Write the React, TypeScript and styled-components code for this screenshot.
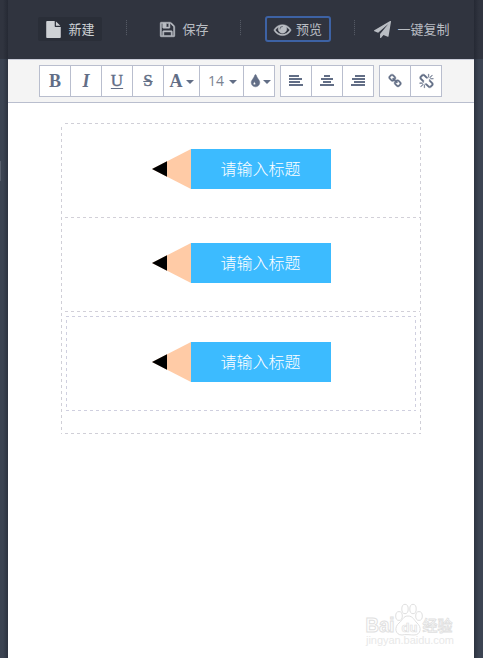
import React from 'react';
import styled, { createGlobalStyle, css } from 'styled-components';

const GlobalStyle = createGlobalStyle`
  * { box-sizing: border-box; }
  html, body { margin: 0; padding: 0; overflow: hidden; }
  body {
    font-family: "Liberation Sans", "Noto Sans CJK SC", sans-serif;
    background: #3c4452;
  }
`;

const paths = {
  file: 'M1152 512v-472q22 14 36 28l408 408q14 14 28 36h-472zm-128 32q0 40 28 68t68 28h544v1056q0 40-28 68t-68 28h-1344q-40 0-68-28t-28-68v-1600q0-40 28-68t68-28h800v544z',
  save: 'M512 1536h768v-384h-768v384zm896 0h128v-896q0-14-10-38.5t-20-34.5l-281-281q-10-10-34-20t-39-10v416q0 40-28 68t-68 28h-576q-40 0-68-28t-28-68v-416h-128v1280h128v-416q0-40 28-68t68-28h832q40 0 68 28t28 68v416zm-384-928v-320q0-13-9.5-22.5t-22.5-9.5h-192q-13 0-22.5 9.5t-9.5 22.5v320q0 13 9.5 22.5t22.5 9.5h192q13 0 22.5-9.5t9.5-22.5zm640 32v928q0 40-28 68t-68 28h-1344q-40 0-68-28t-28-68v-1344q0-40 28-68t68-28h928q40 0 88 20t76 48l280 280q28 28 48 76t20 88z',
  eye: 'M1664 960q-152-236-381-353 61 104 61 225 0 185-131.5 316.5t-316.5 131.5-316.5-131.5-131.5-316.5q0-121 61-225-229 117-381 353 133 205 333.5 326.5t434.5 121.5 434.5-121.5 333.5-326.5zm-720-384q0-20-14-34t-34-14q-125 0-214.5 89.5t-89.5 214.5q0 20 14 34t34 14 34-14 14-34q0-86 61-147t147-61q20 0 34-14t14-34zm848 384q0 34-20 69-140 230-376.5 368.5t-499.5 138.5-499.5-139-376.5-368q-20-35-20-69t20-69q140-229 376.5-368t499.5-139 499.5 139 376.5 368q20 35 20 69z',
  plane: 'M1764 11q33 24 27 64l-256 1536q-5 29-32 45-14 8-31 8-11 0-24-5l-453-185-242 295q-18 23-49 23-13 0-22-4-19-7-30.5-23.5t-11.5-36.5v-349l864-1059-1069 925-395-162q-37-14-40-55-2-40 32-59l1664-960q15-9 32-9 20 0 36 11z',
  tint: 'M896 1152q0-36-20-69-1-1-15.5-22.5t-25.5-38-25-44-21-50.5q-4-16-21-16t-21 16q-7 23-21 50.5t-25 44-25.5 38-15.5 22.5q-20 33-20 69 0 53 37.5 90.5t90.5 37.5 90.5-37.5 37.5-90.5zm512-128q0 212-150 362t-362 150-362-150-150-362q0-145 81-275 6-9 62.5-90.5t101-151 99.5-178 83-201.5q9-30 34-47t51-17 51.5 17 33.5 47q28 93 83 201.5t99.5 178 101 151 62.5 90.5q81 127 81 275z',
  link: 'M1520 1216q0-40-28-68l-208-208q-28-28-68-28-42 0-72 32 3 3 19 18.5t21.5 21.5 15 19 13 25.5 3.5 27.5q0 40-28 68t-68 28q-15 0-27.5-3.5t-25.5-13-19-15-21.5-21.5-18.5-19q-33 31-33 73 0 40 28 68l206 207q27 27 68 27 40 0 68-26l147-146q28-28 28-67zm-703-705q0-40-28-68l-206-207q-28-28-68-28-39 0-68 27l-147 146q-28 28-28 67 0 40 28 68l208 208q27 27 68 27 42 0 72-31-3-3-19-18.5t-21.5-21.5-15-19-13-25.5-3.5-27.5q0-40 28-68t68-28q15 0 27.5 3.5t25.5 13 19 15 21.5 21.5 18.5 19q33-31 33-73zm895 705q0 120-85 203l-147 146q-83 83-203 83-121 0-204-85l-206-207q-83-83-83-203 0-123 88-209l-88-88q-86 88-208 88-120 0-204-84l-208-208q-84-84-84-204t85-203l147-146q83-83 203-83 121 0 204 85l206 207q83 83 83 203 0 123-88 209l88 88q86-88 208-88 120 0 204 84l208 208q84 84 84 204z',
  unlink: 'M503 1271l-256 256q-10 9-23 9-12 0-23-9-9-10-9-23t9-23l256-256q10-9 23-9t23 9q9 10 9 23t-9 23zm169 41v320q0 14-9 23t-23 9-23-9-9-23v-320q0-14 9-23t23-9 23 9 9 23zm-224-224q0 14-9 23t-23 9h-320q-14 0-23-9t-9-23 9-23 23-9h320q14 0 23 9t9 23zm1264 128q0 120-85 203l-147 146q-83 83-203 83-121 0-204-85l-334-335q-21-21-42-56l239-18 273 274q28 28 68 27.5t68-27.5l147-146q28-28 28-67 0-40-28-68l-274-275 18-239q35 21 56 42l336 336q84 86 84 204zm-617-724l-239 18-273-274q-28-28-68-28-39 0-68 27l-147 146q-28 28-28 67 0 40 28 68l274 274-18 240q-35-21-56-42l-336-336q-84-86-84-204 0-120 85-203l147-146q83-83 203-83 121 0 204 85l334 335q21 21 42 56zm633 84q0 14-9 23t-23 9h-320q-14 0-23-9t-9-23 9-23 23-9h320q14 0 23 9t9 23zm-544-544v320q0 14-9 23t-23 9-23-9-9-23v-320q0-14 9-23t23-9 23 9 9 23zm407 151l-256 256q-11 9-23 9t-23-9q-9-10-9-23t9-23l256-256q10-9 23-9t23 9q9 10 9 23t-9 23z',
};

type IconName = keyof typeof paths;

const Svg = styled.svg`
  display: block;
  flex: none;
  fill: currentColor;
`;

const Glyph = styled(Svg)<{ $bold?: boolean }>`
  stroke: currentColor;
  stroke-width: ${(p) => (p.$bold ? 50 : 0)};
  overflow: visible;
`;

const Icon = ({ name, size, bold }: { name: IconName; size: number; bold?: boolean }) => (
  <Glyph $bold={bold} width={size} height={size} viewBox="0 0 1792 1792">
    <path d={paths[name]} />
  </Glyph>
);

const Screen = styled.div`
  display: grid;
  grid-template-columns: 8px 466px 9px;
  width: 483px;
  height: 658px;
  overflow: hidden;
`;

const Side = styled.div<{ $edge: 'left' | 'right' }>`
  display: flex;
  flex-direction: column;
  background:
    linear-gradient(
      to ${(p) => (p.$edge === 'left' ? 'left' : 'right')},
      rgba(20, 24, 34, 0.38),
      rgba(20, 24, 34, 0) 5px
    ),
    linear-gradient(#30343f 59px, #3c4452 59px);
`;

const Handle = styled.div`
  width: 1px;
  height: 20px;
  margin-top: 161px;
  background: #59606d;
`;

const Panel = styled.main`
  display: flex;
  flex-direction: column;
  background: #fff;
`;

const Header = styled.header`
  display: grid;
  grid-template-columns: repeat(4, 114px);
  flex: none;
  height: 59px;
  padding: 0 5px;
  background: #30343f;
`;

const HeaderCell = styled.div`
  display: grid;
  grid-template-columns: 113px 1px;
  align-items: center;
  justify-items: center;
`;

const Separator = styled.i`
  width: 1px;
  height: 16px;
  margin-bottom: 3px;
  background: repeating-linear-gradient(#535863 0 1px, #353944 1px 2px);
`;

const HeaderButton = styled.button<{ $variant?: 'filled' | 'outlined'; $gap: number }>`
  display: flex;
  align-items: center;
  justify-content: center;
  gap: ${(p) => p.$gap}px;
  height: 26px;
  margin: 0 -1px 1px 0;
  padding: 0;
  border: 0;
  background: none;
  color: #b9bdc3;
  font: 13px/24px "Noto Sans CJK SC", sans-serif;
  white-space: nowrap;
  ${(p) =>
    p.$variant === 'filled' &&
    css`
      width: 64px;
      height: 24px;
      border-radius: 2px;
      background: #2a2e38;
      color: #ced1d5;
    `}
  ${(p) =>
    p.$variant === 'outlined' &&
    css`
      width: 66px;
      border: 2px solid #3d62a4;
      border-radius: 3px;
    `}
`;

const Label = styled.span`
  margin-top: -1px;
`;

const Toolbar = styled.div`
  display: flex;
  flex: none;
  gap: 5px;
  height: 44px;
  padding: 5px 31px 0;
  border-top: 1px solid #c9ccd8;
  border-bottom: 1px solid #b9bece;
  background: #f4f4f4;
`;

const Group = styled.div`
  display: flex;
  height: 32px;
  border: 1px solid #b9bece;
  background: #fff;
`;

const Tool = styled.button<{ $width?: number; $gap?: number }>`
  display: flex;
  align-items: center;
  justify-content: center;
  gap: ${(p) => p.$gap ?? 0}px;
  width: ${(p) => p.$width ?? 31}px;
  padding: 0;
  border: 0;
  border-right: 1px solid #b9bece;
  background: none;
  color: #626e86;
  &:last-child {
    width: ${(p) => (p.$width ?? 31) - 1}px;
    border-right: 0;
  }
`;

const Letter = styled.span<{ $italic?: boolean; $line?: 'underline' | 'line-through' }>`
  font: ${(p) => (p.$italic ? 'italic' : 'normal')} bold 18px/20px "Liberation Serif", serif;
  ${(p) => p.$line && 'font-weight: 400; font-size: 17px; -webkit-text-stroke: 0.4px #626e86;'}
  text-decoration: ${(p) => p.$line ?? 'none'};
  text-decoration-thickness: 1px;
  text-underline-offset: 2px;
`;

const SizeValue = styled.span`
  margin-left: 2px;
  color: #7b8290;
  font: 14px/20px "Open Sans", sans-serif;
`;

const Caret = styled.i`
  margin-top: 1px;
  border: 4px solid transparent;
  border-top-color: #626e86;
  border-bottom: 0;
`;

const Bars = styled.span<{ $align: 'flex-start' | 'center' | 'flex-end' }>`
  display: flex;
  flex-direction: column;
  align-items: ${(p) => p.$align};
  gap: 1px;
  width: 14px;
  margin-bottom: 1px;
`;

const Bar = styled.i<{ $w: number }>`
  width: ${(p) => p.$w}px;
  height: 2px;
  background: #626e86;
`;

const dashX = (c: string) => `repeating-linear-gradient(90deg, ${c} 0 3px, transparent 3px 6px)`;
const dashY = (c: string) => `repeating-linear-gradient(${c} 0 3px, transparent 3px 6px)`;

const Canvas = styled.section`
  display: flex;
  flex-direction: column;
  width: 360px;
  height: 311px;
  margin: 20px 0 0 53px;
  padding: 1px;
  background:
    ${dashX('#d0cfd7')} 4px 0 / 356px 1px no-repeat,
    ${dashX('#d0cfd7')} 4px 100% / 356px 1px no-repeat,
    ${dashY('#d0cfd7')} 0 4px / 1px 307px no-repeat,
    ${dashY('#d0cfd7')} 100% 4px / 1px 307px no-repeat;
`;

const Block = styled.div`
  height: 94px;
  padding-top: 25px;
  background: ${dashX('#d2d0d8')} 3px 100% / 355px 1px no-repeat;
`;

const LastBlock = styled.div`
  height: 121px;
  padding: 4px;
`;

const Selected = styled.div`
  height: 95px;
  padding-top: 26px;
  background:
    ${dashX('#cfcfdf')} 0 0 / 100% 1px no-repeat,
    ${dashX('#cfcfdf')} 0 100% / 100% 1px no-repeat,
    ${dashY('#cfcfdf')} 0 4px / 1px 90px no-repeat,
    ${dashY('#cfcfdf')} 100% 4px / 1px 90px no-repeat;
`;

const Pencil = styled.div`
  display: flex;
  width: 179px;
  height: 40px;
  margin: 0 auto;
`;

const Title = styled.div`
  width: 140px;
  height: 40px;
  background: #3cbbff;
  color: #fff;
  font: 300 16px/38px "Noto Sans CJK SC", sans-serif;
  text-align: center;
`;

const PencilTitle = () => (
  <Pencil>
    <Svg width="39" height="40" viewBox="0 0 39 40">
      <path d="M0 20 39 0v40z" fill="#ffcba6" />
      <path d="M0 20 15 12.3v15.4z" fill="#000" />
    </Svg>
    <Title>请输入标题</Title>
  </Pencil>
);

const Watermark = styled.svg`
  position: absolute;
  left: 360px;
  top: 600px;
  fill: #fff;
  stroke: #e0e0e0;
  stroke-width: 1;
`;

const BaiduMark = () => (
  <Watermark width="100" height="52" viewBox="0 0 100 52">
    <g fontFamily="Liberation Sans" fontWeight="700">
      <text x="5.5" y="31.5" fontSize="20" textLength="29" lengthAdjust="spacingAndGlyphs">Bai</text>
      <path d="M48 16c5 0 6 4 9 7 5 4 4 12-3 12-3 0-9-1-12 0-7 0-8-8-3-12 4-3 4-7 9-7z" />
      <ellipse cx="39" cy="16" rx="3.3" ry="4.4" />
      <ellipse cx="45" cy="9" rx="3.2" ry="4.7" />
      <ellipse cx="53" cy="9" rx="3.2" ry="4.7" />
      <ellipse cx="59" cy="16" rx="3.3" ry="4.4" />
      <text x="41.5" y="31.5" fontSize="13" strokeWidth=".7">du</text>
    </g>
    <text x="62.5" y="30.5" fontSize="15" fontFamily="Noto Sans CJK SC" fontWeight="500" strokeWidth=".8">经验</text>
    <text x="6" y="44" fontSize="11" fontFamily="Liberation Sans" fill="#e8e8e8" stroke="none" textLength="88">
      jingyan.baidu.com
    </text>
  </Watermark>
);

const headerItems: {
  icon: IconName;
  size: number;
  label: string;
  gap: number;
  variant?: 'filled' | 'outlined';
}[] = [
  { icon: 'file', size: 17, label: '新建', gap: 6, variant: 'filled' },
  { icon: 'save', size: 17, label: '保存', gap: 6 },
  { icon: 'eye', size: 17, label: '预览', gap: 5, variant: 'outlined' },
  { icon: 'plane', size: 17, label: '一键复制', gap: 6 },
];

export default function App() {
  return (
    <>
      <GlobalStyle />
      <Screen>
        <Side $edge="left">
          <Handle />
        </Side>
        <Panel>
          <Header>
            {headerItems.map((item, i) => (
              <HeaderCell key={item.label}>
                <HeaderButton $variant={item.variant} $gap={item.gap}>
                  <Icon name={item.icon} size={item.size} bold={item.icon === 'save' || item.icon === 'eye'} />
                  <Label>{item.label}</Label>
                </HeaderButton>
                {i < 3 && <Separator />}
              </HeaderCell>
            ))}
          </Header>
          <Toolbar>
            <Group>
              <Tool><Letter>B</Letter></Tool>
              <Tool><Letter $italic>I</Letter></Tool>
              <Tool><Letter $line="underline">U</Letter></Tool>
              <Tool><Letter $line="line-through">S</Letter></Tool>
              <Tool $width={36} $gap={3}><Letter>A</Letter><Caret /></Tool>
              <Tool $width={44} $gap={5}><SizeValue>14</SizeValue><Caret /></Tool>
              <Tool $gap={0}><Icon name="tint" size={15} bold /><Caret /></Tool>
            </Group>
            <Group>
              {(['flex-start', 'center', 'flex-end'] as const).map((align) => (
                <Tool key={align}>
                  <Bars $align={align}>
                    {(align === 'center' ? [6, 12, 8, 14] : [10, 13, 11, 14]).map((w, i) => (
                      <Bar key={i} $w={w} />
                    ))}
                  </Bars>
                </Tool>
              ))}
            </Group>
            <Group>
              <Tool><Icon name="link" size={14} bold /></Tool>
              <Tool><Icon name="unlink" size={15} bold /></Tool>
            </Group>
          </Toolbar>
          <Canvas>
            <Block><PencilTitle /></Block>
            <Block><PencilTitle /></Block>
            <LastBlock>
              <Selected><PencilTitle /></Selected>
            </LastBlock>
          </Canvas>
        </Panel>
        <Side $edge="right" />
      </Screen>
      <BaiduMark />
    </>
  );
}
